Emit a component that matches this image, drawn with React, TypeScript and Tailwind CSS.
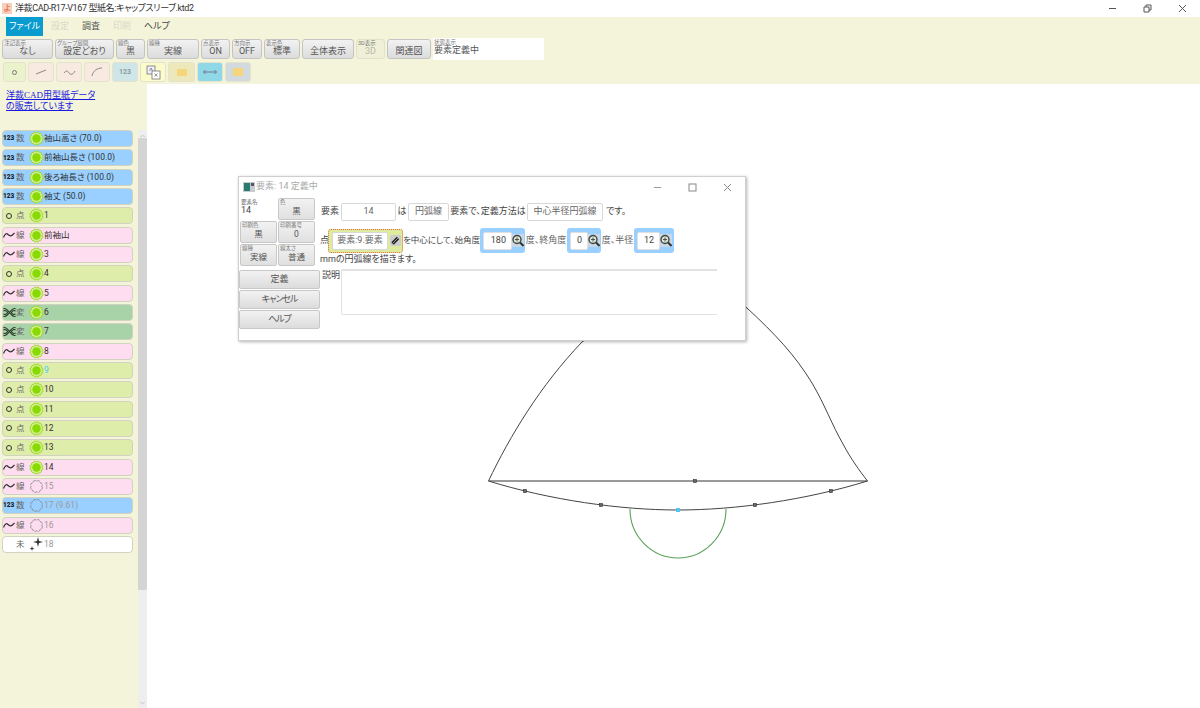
import React from "react";

const toolbar = [
  { label: "注記表示", text: "なし", w: "w-[51px]" },
  { label: "グループ展開", text: "設定どおり", w: "w-[59px]" },
  { label: "線色", text: "黒", w: "w-[29px]" },
  { label: "線種", text: "実線", w: "w-[52px]" },
  { label: "点表示", text: "ON", w: "w-[29px]" },
  { label: "方向示", text: "OFF", w: "w-[30px]" },
  { label: "表示色", text: "標準", w: "w-[36px]" },
  { label: "", text: "全体表示", w: "w-[52px]" },
];

type Kind = "num" | "pt" | "line" | "mod" | "none";

const rows: { kind: Kind; text: string; state?: "off" | "new"; cyan?: boolean }[] = [
  { kind: "num", text: "袖山高さ (70.0)" },
  { kind: "num", text: "前袖山長さ (100.0)" },
  { kind: "num", text: "後ろ袖長さ (100.0)" },
  { kind: "num", text: "袖丈 (50.0)" },
  { kind: "pt", text: "1" },
  { kind: "line", text: "前袖山" },
  { kind: "line", text: "3" },
  { kind: "pt", text: "4" },
  { kind: "line", text: "5" },
  { kind: "mod", text: "6" },
  { kind: "mod", text: "7" },
  { kind: "line", text: "8" },
  { kind: "pt", text: "9", cyan: true },
  { kind: "pt", text: "10" },
  { kind: "pt", text: "11" },
  { kind: "pt", text: "12" },
  { kind: "pt", text: "13" },
  { kind: "line", text: "14" },
  { kind: "line", text: "15", state: "off" },
  { kind: "num", text: "17 (9.61)", state: "off" },
  { kind: "line", text: "16", state: "off" },
  { kind: "none", text: "18", state: "new" },
];

const rowBg: Record<Kind, string> = {
  num: "bg-[#99d0ff]",
  pt: "bg-[#deedaa]",
  line: "bg-[#ffddf0]",
  mod: "bg-[#a8d2a8]",
  none: "bg-white",
};

const rowWord: Record<Kind, string> = { num: "数", pt: "点", line: "線", mod: "変", none: "未" };

// scalloped ring used by the sidebar state icons
function scallop(n: number, r: number) {
  const chord = 2 * r * Math.sin(Math.PI / n);
  const arc = (chord * 0.56).toFixed(2);
  let d = "";
  for (let i = 0; i <= n; i++) {
    const a = (i / n) * Math.PI * 2;
    const x = (7.5 + r * Math.cos(a)).toFixed(2);
    const y = (7.5 + r * Math.sin(a)).toFixed(2);
    d += i === 0 ? `M${x} ${y}` : ` A${arc} ${arc} 0 0 1 ${x} ${y}`;
  }
  return d;
}

function Squiggle() {
  return (
    <svg width="12" height="8" viewBox="0 0 12 8" fill="none" stroke="#333" strokeWidth="1.2">
      <path d="M0.5 6.5 C2 2.5 3.5 2 5 3.5 S8 6 11.5 2" />
    </svg>
  );
}

function KindIcon({ kind }: { kind: Kind }) {
  if (kind === "num") return <span className="text-[6.5px] leading-none font-black text-[#222]">123</span>;
  if (kind === "pt") return <span className="ml-[3px] h-[6px] w-[6px] rounded-full border-[1.5px] border-[#333]" />;
  if (kind === "line") return <Squiggle />;
  if (kind === "mod") {
    return (
      <svg width="14" height="11" viewBox="0 0 14 11" fill="none" stroke="#2a3a2a" strokeWidth="1.2">
        <path d="M0.5 1.5 C3 0 5 3 7 5.5 S11 11 13.5 9.5" />
        <path d="M0.5 9.5 C3 11 5 8 7 5.5 S11 0 13.5 1.5" />
        <path d="M0.5 4 C2 2.5 4 4 5 5.5 C4 7 2 8.5 0.5 7" />
        <path d="M13.5 4 C12 2.5 10 4 9 5.5 C10 7 12 8.5 13.5 7" />
      </svg>
    );
  }
  return <span className="w-[12px]" />;
}

function StateIcon({ state }: { state?: "off" | "new" }) {
  if (state === "new") {
    return (
      <svg width="15" height="15" viewBox="0 0 15 15" fill="#333">
        <path d="M9 0 L10 4 L14 5 L10 6 L9 10 L8 6 L4 5 L8 4 Z" />
        <path d="M3 9 L3.6 11 L5.5 11.6 L3.6 12.2 L3 14 L2.4 12.2 L0.5 11.6 L2.4 11 Z" />
      </svg>
    );
  }
  if (state === "off") {
    return (
      <svg width="15" height="15" viewBox="0 0 15 15" fill="none" stroke="#858585" strokeWidth="0.9">
        <path d={scallop(8, 5.3)} strokeDasharray="3.4 0.7" />
      </svg>
    );
  }
  return (
    <svg width="15" height="15" viewBox="0 0 15 15">
      <path d={scallop(12, 5.8)} fill="#d4ec94" stroke="#94dc14" strokeWidth="1" />
      <circle cx="7.5" cy="7.5" r="4.2" fill="#88da00" />
    </svg>
  );
}

function ToolButton({ label, text, w, dim }: { label: string; text: string; w: string; dim?: boolean }) {
  return (
    <div
      className={`relative flex h-[20px] shrink-0 items-center justify-center rounded-[3px] border text-[9px] ${w} ${
        dim
          ? "border-[#e2e2c8] bg-[#f0f0d8] text-[#b8b8a8]"
          : "border-[#c4c4c4] bg-gradient-to-b from-[#f2f2f2] to-[#dcdcdc] text-[#555]"
      }`}
    >
      {label && <span className="absolute top-[0px] left-[1px] text-[5.5px] leading-[6px] whitespace-nowrap text-[#777]">{label}</span>}
      <span className="mt-[5px] leading-none">{text}</span>
    </div>
  );
}

function IconButton({ bg, w, children }: { bg: string; w: string; children: React.ReactNode }) {
  return (
    <div className={`flex h-[20px] shrink-0 items-center justify-center rounded-[3px] border border-[#e4e4cc] ${bg} ${w}`}>
      {children}
    </div>
  );
}

function Field({ text, w }: { text: string; w: string }) {
  return (
    <span className={`flex h-[18px] shrink-0 items-center justify-center rounded-[2px] border border-[#d8d8d8] bg-white text-[9px] text-[#666] ${w}`}>
      {text}
    </span>
  );
}

function Zoom() {
  return (
    <svg width="12" height="13" viewBox="0 0 12 13" fill="none" className="shrink-0">
      <rect x="0" y="0" width="12" height="13" fill="#c9d8e4" />
      <circle cx="5" cy="5.5" r="4" fill="#d8e8d8" stroke="#444" strokeWidth="1.4" />
      <path d="M3 5.5 H7 M5 3.5 V7.5" stroke="#444" strokeWidth="0.9" />
      <path d="M8 8.5 L11.5 12" stroke="#333" strokeWidth="2" />
    </svg>
  );
}

function NumBox({ text, w, input }: { text: string; w: string; input: string }) {
  return (
    <span className={`flex h-[25px] shrink-0 items-center rounded-[3px] bg-[#99d0ff] pl-[3px] ${w}`}>
      <span className={`flex h-[18px] shrink-0 items-center justify-end rounded-[2px] border border-[#e0e0e0] bg-white pr-[5px] text-[9px] text-[#444] ${input}`}>
        {text}
      </span>
      <Zoom />
    </span>
  );
}

function SmallCell({ label, text, w = "w-[37px]" }: { label: string; text: string; w?: string }) {
  return (
    <div className={`relative flex h-[22px] items-center justify-center rounded-[2px] border border-[#c8c8c8] bg-gradient-to-b from-[#f2f2f2] to-[#e0e0e0] text-[8.5px] text-[#555] ${w}`}>
      <span className="absolute top-[0px] left-[1px] text-[5.5px] leading-[6px] whitespace-nowrap text-[#777]">{label}</span>
      <span className="mt-[4px] leading-none">{text}</span>
    </div>
  );
}

function ActionButton({ text, narrow }: { text: string; narrow?: boolean }) {
  return (
    <div className={`flex h-[19px] w-[81px] items-center justify-center rounded-[2px] border border-[#c8c8c8] bg-gradient-to-b from-[#f2f2f2] to-[#dcdcdc] text-[9px] text-[#555] ${narrow ? "tracking-[-1px]" : ""}`}>
      {text}
    </div>
  );
}

function Dialog() {
  return (
    <div className="absolute top-[92px] left-[91px] h-[165px] w-[508px] border border-[#cfcfcf] bg-white shadow-[1px_1px_3px_rgba(0,0,0,0.3)]">
      <div className="flex h-[20px] items-center pl-[4px] text-[9px] text-[#aaa]">
        <svg width="12" height="10" viewBox="0 0 12 10" className="mr-[1px]">
          <rect width="12" height="10" fill="#c8ccd0" />
          <rect x="1" y="1" width="6" height="8" fill="#2a7a70" />
          <rect x="8" y="1" width="3" height="3" fill="#556" />
        </svg>
        <span>要素: 14 定義中</span>
        <div className="ml-auto flex items-center gap-[26px] pr-[13px]">
          <svg width="9" height="9" viewBox="0 0 9 9" stroke="#999"><path d="M1 4.5 H8" /></svg>
          <svg width="9" height="9" viewBox="0 0 9 9" fill="none" stroke="#888"><rect x="1" y="1" width="7" height="7" /></svg>
          <svg width="9" height="9" viewBox="0 0 9 9" stroke="#888"><path d="M1 1 L8 8 M8 1 L1 8" /></svg>
        </div>
      </div>
      <div className="flex">
        <div className="flex w-[81px] shrink-0 flex-col">
          <div className="ml-[1px] grid grid-cols-[37px_37px] gap-[1px] pt-[1px]">
            <div className="relative h-[22px] text-[9px] leading-none text-[#444]">
              <span className="absolute top-[2px] left-[1px] text-[5.5px] leading-none text-[#666]">要素名</span>
              <span className="absolute top-[8px] left-[1px]">14</span>
            </div>
            <SmallCell label="色" text="黒" />
            <SmallCell label="印刷色" text="黒" />
            <SmallCell label="印刷番号" text="0" />
            <SmallCell label="線種" text="実線" />
            <SmallCell label="線太さ" text="普通" />
          </div>
          <div className="mt-[4px] flex flex-col gap-[1px]">
            <ActionButton text="定義" />
            <ActionButton text="キャンセル" narrow />
            <ActionButton text="ヘルプ" narrow />
          </div>
        </div>
        <div className="min-w-0 flex-1 text-[9px] text-[#444]">
          <div className="mt-[5px] ml-[1px] flex h-[20px] items-center">
            <span className="w-[20px]">要素</span>
            <Field text="14" w="w-[55px]" />
            <span className="w-[12px] text-center">は</span>
            <Field text="円弧線" w="w-[41px]" />
            <span className="w-[78px] text-center whitespace-nowrap">要素で、定義方法は</span>
            <Field text="中心半径円弧線" w="w-[76px]" />
            <span className="ml-[3px]">です。</span>
          </div>
          <div className="mt-[6px] flex h-[25px] items-center">
            <span className="w-[8px]">点</span>
            <span className="flex h-[24px] w-[75px] shrink-0 items-center rounded-[3px] border border-dotted border-[#e8663c] bg-[#dcec9c] pl-[3px]">
              <Field text="要素:9.要素" w="w-[56px]" />
              <svg width="11" height="11" viewBox="0 0 11 11" className="ml-[2px]">
                <rect width="11" height="11" rx="2" fill="#ccc" />
                <path d="M2.5 8.5 L8 3" stroke="#222" strokeWidth="3.4" />
                <path d="M3 8 L8 3" stroke="#eee" strokeWidth="0.6" />
              </svg>
            </span>
            <span className="w-[77px] text-center text-[8.5px] whitespace-nowrap">を中心にして、始角度</span>
            <NumBox text="180" w="w-[45px]" input="w-[29px]" />
            <span className="w-[42px] text-center whitespace-nowrap text-[#666]">度、終角度</span>
            <NumBox text="0" w="w-[34px]" input="w-[18px]" />
            <span className="w-[33px] text-center whitespace-nowrap text-[#666]">度、半径</span>
            <NumBox text="12" w="w-[40px]" input="w-[23px]" />
          </div>
          <div className="mt-[1px] h-[11px] leading-[11px]">mmの円弧線を描きます。</div>
          <div className="mt-[4px] ml-[2px] flex">
            <span className="mt-[1px] w-[19px] leading-[11px]">説明</span>
            <div className="h-[46px] w-[376px] rounded-l-[2px] border-t-2 border-b border-l border-[#e2e2e2]" />
          </div>
        </div>
      </div>
    </div>
  );
}

export default function App() {
  return (
    <div className="flex h-[708px] w-[1200px] flex-col overflow-hidden bg-white font-['Roboto','Noto_Sans_CJK_JP',sans-serif] text-[#333] [font-feature-settings:'palt']">
      <div className="flex h-[17px] shrink-0 items-center text-[9px] tracking-[-0.4px]">
        <span className="mr-[3px] ml-[2px] flex h-[11px] w-[10px] items-center justify-center bg-[#f8d0b8] text-[8px] leading-none text-[#d94a3a]">よ</span>
        <span>洋裁CAD-R17-V167 型紙名:キャップスリーブ.ktd2</span>
        <div className="ml-auto flex items-center gap-[26px] pr-[13px]">
          <svg width="9" height="9" viewBox="0 0 9 9" stroke="#555"><path d="M1 4.5 H8" /></svg>
          <svg width="9" height="9" viewBox="0 0 9 9" fill="none" stroke="#555"><path d="M1 3 H6 V8 H1 Z M3 3 V1 H8 V6 H6" /></svg>
          <svg width="9" height="9" viewBox="0 0 9 9" stroke="#555"><path d="M1 1 L8 8 M8 1 L1 8" /></svg>
        </div>
      </div>
      <div className="h-[67px] shrink-0 bg-[#f4f4da]">
        <div className="flex h-[19px] items-center pl-[6px] text-[9px]">
          <span className="flex h-[19px] w-[37px] items-center justify-center bg-[#0a9ccf] text-white">ファイル</span>
          <span className="ml-[8px] w-[31px] text-[#d8d8c8]">設定</span>
          <span className="w-[31px] text-[#555]">調査</span>
          <span className="w-[31px] text-[#d8d8c8]">印刷</span>
          <span className="text-[#444]">ヘルプ</span>
        </div>
        <div className="mt-[2px] flex h-[22px] items-center gap-[2px] pl-[2px]">
          {toolbar.map((b) => (
            <ToolButton key={b.text} {...b} />
          ))}
          <ToolButton label="3D表示" text="3D" w="w-[29px]" dim />
          <ToolButton label="" text="関連図" w="w-[44px]" />
          <div className="relative h-[22px] w-[111px] bg-white pt-[6px] pl-[1px] text-[9px] leading-[13px] text-[#555]">
            <span className="absolute top-[1px] left-[1px] text-[5.5px] leading-[6px] text-[#777]">状態表示</span>
            要素定義中
          </div>
        </div>
        <div className="mt-[2px] flex h-[20px] gap-[2px] pl-[3px]">
          <IconButton bg="bg-[#eaf3cb]" w="w-[23px]">
            <span className="h-[5px] w-[5px] rounded-full border border-[#777]" />
          </IconButton>
          <IconButton bg="bg-[#f8e9e1]" w="w-[26px]">
            <svg width="12" height="6" viewBox="0 0 12 6" stroke="#888"><path d="M1 5 L11 1" /></svg>
          </IconButton>
          <IconButton bg="bg-[#f8e9e1]" w="w-[26px]">
            <svg width="13" height="7" viewBox="0 0 13 7" fill="none" stroke="#888"><path d="M1 4 C3 1 5 2 6 4 S10 6 12 2" /></svg>
          </IconButton>
          <IconButton bg="bg-[#f8e9e1]" w="w-[26px]">
            <svg width="12" height="10" viewBox="0 0 12 10" fill="none" stroke="#888"><path d="M1 9 C2 4 6 1 11 1" /></svg>
          </IconButton>
          <IconButton bg="bg-[#cfe6e8]" w="w-[26px]">
            <span className="text-[7px] font-bold text-[#8a9a9a]">123</span>
          </IconButton>
          <IconButton bg="bg-[#fbfbcc]" w="w-[26px]">
            <svg width="15" height="15" viewBox="0 0 15 15" fill="none" stroke="#777" strokeWidth="0.8">
              <rect x="1" y="1" width="8" height="8" fill="#eef" />
              <rect x="6" y="6" width="8" height="8" fill="#fff" />
              <path d="M3.5 6 L5 3 L6.5 6 M8.5 8.5 L11.5 11.5 M11.5 8.5 L8.5 11.5" />
            </svg>
          </IconButton>
          <IconButton bg="bg-[#ece8bb]" w="w-[27px]">
            <span className="h-[7px] w-[10px] rounded-[1px] bg-[#f5d67a]" />
          </IconButton>
          <IconButton bg="bg-[#8fd8e8]" w="w-[26px]">
            <svg width="14" height="6" viewBox="0 0 14 6" fill="none" stroke="#778"><path d="M0.5 3 H13.5 M2.5 1 L0.5 3 L2.5 5 M11.5 1 L13.5 3 L11.5 5" /></svg>
          </IconButton>
          <IconButton bg="bg-[#d3dadd]" w="w-[26px]">
            <span className="h-[8px] w-[10px] rounded-[1px] bg-[#f5d67a]" />
          </IconButton>
        </div>
      </div>
      <div className="flex min-h-0 flex-1">
        <aside className="flex w-[147px] shrink-0 flex-col bg-[#f4f4da]">
          <a href="#" className="mt-[6px] ml-[6px] block font-['Liberation_Serif','Noto_Sans_CJK_JP',serif] text-[9px] leading-[11px] text-[#1a1ae0] underline">
            洋裁CAD用型紙データ
            <br />
            の販売しています
          </a>
          <div className="mt-[18px] flex min-h-0 flex-1">
            <div className="ml-[2px] flex w-[131px] flex-col gap-[2.33px]">
              {rows.map((r) => (
                <div
                  key={r.text}
                  className={`flex h-[17px] shrink-0 items-center rounded-[4px] border border-[#d2d2c0] text-[8.5px] ${rowBg[r.kind]}`}
                >
                  <span className="flex w-[13px] shrink-0 items-center">
                    <KindIcon kind={r.kind} />
                  </span>
                  <span className="w-[10px] shrink-0 text-[#666]">{rowWord[r.kind]}</span>
                  <span className="ml-[3px] flex w-[15px] shrink-0 items-center">
                    <StateIcon state={r.state} />
                  </span>
                  <span className={`whitespace-nowrap ${r.cyan ? "text-[#3fd0f0]" : r.state ? "text-[#999]" : "text-[#333]"}`}>{r.text}</span>
                </div>
              ))}
            </div>
            <div className="ml-[5px] flex w-[9px] shrink-0 flex-col bg-[#eeeeee]">
              <span className="flex h-[8px] items-center justify-center text-[5px] leading-none text-[#777]">︿</span>
              <div className="h-[452px] rounded-[1px] bg-[#d4d4d4]" />
              <span className="mt-auto flex h-[8px] items-center justify-center text-[5px] leading-none text-[#777]">﹀</span>
            </div>
          </div>
        </aside>
        <main className="relative min-w-0 flex-1 bg-white">
          <svg width="1053" height="624" viewBox="147 84 1053 624" fill="none" className="block">
            <path d="M488.5 481 C510 436 540 386 582 342 L640 300" stroke="#444" strokeWidth="1" />
            <path d="M730 295 L747 308 C775 334 795 355 812 383 C825 405 832 425 843 444 C851 459 859 470 867.5 481" stroke="#444" strokeWidth="1" />
            <path d="M488.5 481 H867.5" stroke="#777" strokeWidth="1.4" />
            <path d="M488.5 481 C550 500 620 510 678 510 C736 510 806 500 867.5 481" stroke="#444" strokeWidth="1" />
            <path d="M630 509 A48 49 0 0 0 726 509" stroke="#5aa05a" strokeWidth="1.1" />
            {[[525, 491], [601, 505], [695, 481], [755, 505], [831, 491]].map(([x, y]) => (
              <rect key={x} x={x - 1.5} y={y - 1.5} width="3" height="3" fill="#666" stroke="#333" strokeWidth="0.6" />
            ))}
            <rect x="676" y="508" width="4" height="4" fill="#4fc8f0" />
          </svg>
          <Dialog />
        </main>
      </div>
    </div>
  );
}
